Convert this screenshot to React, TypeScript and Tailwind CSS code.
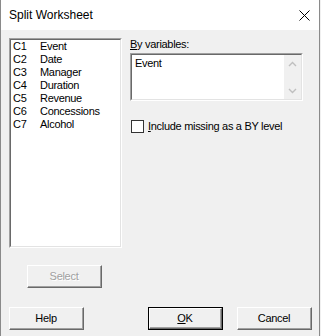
import React from "react";

const F = { fontFamily: '"Liberation Sans", Arial, sans-serif' };

function Sunken({ className, children }: { className: string; children?: React.ReactNode }) {
  return (
    <div className={`border-t border-l border-t-[#a0a0a0] border-l-[#a0a0a0] border-b border-r border-b-white border-r-white ${className}`}>
      <div className="w-full h-full border-t border-l border-t-[#696969] border-l-[#696969] border-b border-r border-b-[#e3e3e3] border-r-[#e3e3e3] bg-white relative">
        {children}
      </div>
    </div>
  );
}

function Btn({ children, className = "", def = false, disabled = false }: { children: React.ReactNode; className?: string; def?: boolean; disabled?: boolean }) {
  const inner = (
    <div className="w-full h-full border-t border-l border-t-white border-l-white border-b border-r border-b-[#696969] border-r-[#696969]">
      <div className="w-full h-full border-b border-r border-b-[#a0a0a0] border-r-[#a0a0a0] bg-[#f0f0f0] flex items-center justify-center">
        <span
          className={`text-[11px] leading-[13px] tracking-[-0.3px] ${disabled ? "text-[#a0a0a0] [text-shadow:1px_1px_0_#ffffff]" : "text-black"}`}
        >
          {children}
        </span>
      </div>
    </div>
  );
  if (def) {
    return <div className={`w-[75px] h-[23px] border border-black ${className}`}>{inner}</div>;
  }
  return <div className={`w-[75px] h-[23px] ${className}`}>{inner}</div>;
}

const items = [
  ["C1", "Event"],
  ["C2", "Date"],
  ["C3", "Manager"],
  ["C4", "Duration"],
  ["C5", "Revenue"],
  ["C6", "Concessions"],
  ["C7", "Alcohol"],
];

export default function App() {
  return (
    <div className="w-[321px] h-[336px] bg-[#f0f0f0] flex overflow-hidden" style={F}>
      <div className="w-[320px] h-full border-l border-r border-[#8a8a8a] flex flex-col">
        <div className="h-[30px] bg-white flex items-center pl-[8px]">
          <span className="text-[12px] text-black leading-[16px]">Split Worksheet</span>
          <svg className="ml-auto mr-[9px]" width="11" height="11" viewBox="0 0 11 11">
            <path d="M0.5 0.5 L10.5 10.5 M10.5 0.5 L0.5 10.5" stroke="#000" strokeWidth="1" fill="none" />
          </svg>
        </div>
        <div className="flex-1 flex flex-col">
          <div className="flex pt-[8px] pl-[8px]">
            <Sunken className="w-[113px] h-[210px]">
              <div className="pl-[2px] pt-0">
                {items.map(([c, n]) => (
                  <div key={c} className="flex h-[13px] text-[11px] leading-[13px] text-black tracking-[-0.3px]">
                    <span className="w-[27px]">{c}</span>
                    <span>{n}</span>
                  </div>
                ))}
              </div>
            </Sunken>
            <div className="ml-[8px] w-[173px] flex flex-col">
              <div className="h-[13px] text-[11px] leading-[13px] text-black tracking-[-0.3px]">
                <span className="underline underline-offset-1">B</span>y variables:
              </div>
              <Sunken className="mt-[2px] w-[173px] h-[48px]">
                <div className="pl-[3px] pt-[2px] text-[11px] leading-[13px] text-black tracking-[-0.3px]">Event</div>
                <div className="absolute right-0 top-0 bottom-0 w-[17px] bg-[#f0f0f0] flex flex-col justify-between">
                  <div className="h-[17px] flex items-center justify-center">
                    <svg width="9" height="6" viewBox="0 0 9 6">
                      <path d="M1 5 L4.5 1.5 L8 5" stroke="#bfbfbf" strokeWidth="1.4" fill="none" />
                    </svg>
                  </div>
                  <div className="h-[17px] flex items-center justify-center">
                    <svg width="9" height="6" viewBox="0 0 9 6">
                      <path d="M1 1 L4.5 4.5 L8 1" stroke="#bfbfbf" strokeWidth="1.4" fill="none" />
                    </svg>
                  </div>
                </div>
              </Sunken>
              <div className="mt-[19px] flex items-center h-[13px] pl-[1px]">
                <div className="w-[13px] h-[13px] border border-[#333333] bg-white" />
                <span className="ml-[4px] text-[11px] leading-[13px] text-black tracking-[-0.3px]">
                  <span className="underline underline-offset-1">I</span>nclude missing as a BY level
                </span>
              </div>
            </div>
          </div>
          <div className="mt-[17px] pl-[26px]">
            <Btn disabled>Select</Btn>
          </div>
          <div className="mt-[19px] pl-[8px] flex">
            <Btn>Help</Btn>
            <Btn def className="ml-[64px]">
              <span className="underline underline-offset-1">O</span>K
            </Btn>
            <Btn className="ml-[14px]">Cancel</Btn>
          </div>
        </div>
      </div>
    </div>
  );
}
